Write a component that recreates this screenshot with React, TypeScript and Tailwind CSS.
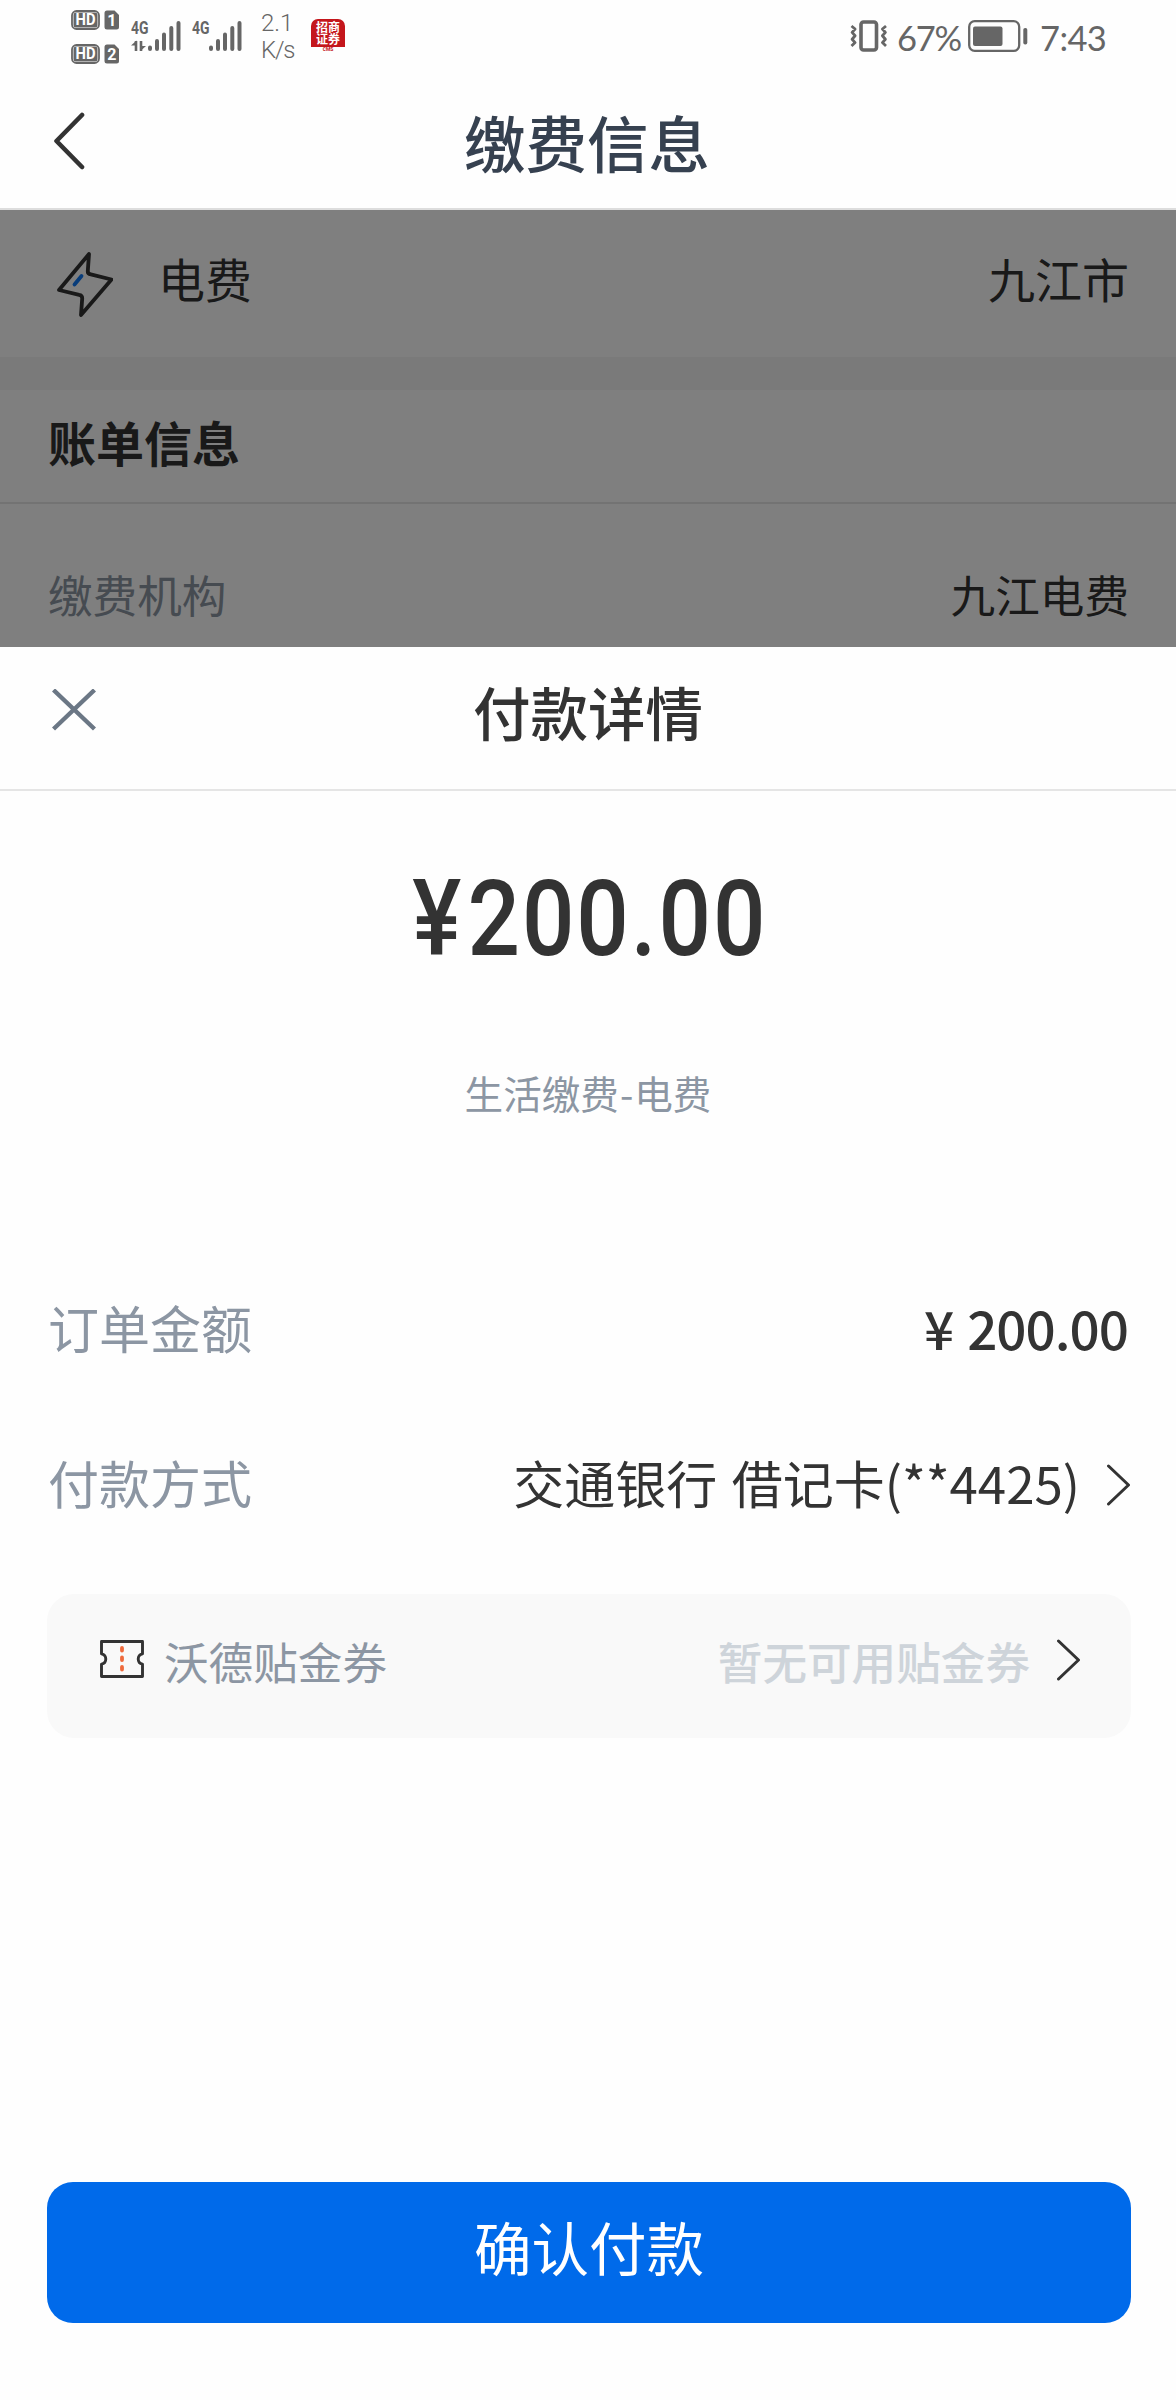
import type { ReactNode } from "react";
import clsx from "clsx";

function HdBadge({ sim }: { sim: string }) {
  return (
    <svg width="49" height="20" viewBox="0 0 49 20" className="block overflow-visible">
      <rect x="1" y="1" width="27" height="18" rx="4.5" fill="none" stroke="#666" strokeWidth="1.8" />
      <rect x="2.5" y="2.5" width="24" height="15" rx="2.5" fill="#666" />
      <text x="4.5" y="15.4" textLength="20" lengthAdjust="spacingAndGlyphs" fontSize="16" fontWeight="700" fontFamily="Roboto, sans-serif" fill="#fff">
        HD
      </text>
      <path d="M36 .5h7.5L48 5v12a2.5 2.5 0 0 1-2.5 2.5H36a2.5 2.5 0 0 1-2.5-2.5V3A2.5 2.5 0 0 1 36 .5z" fill="#666" />
      <text x="40.8" y="15.8" textAnchor="middle" fontSize="16" fontWeight="700" fontFamily="Roboto, sans-serif" fill="#fff">
        {sim}
      </text>
    </svg>
  );
}

function Signal({ data }: { data?: boolean }) {
  return (
    <svg width="50" height="32" viewBox="0 0 50 32" className="block overflow-visible">
      <text x="0" y="14.3" textLength="17.5" lengthAdjust="spacingAndGlyphs" fontSize="18.5" fontWeight="700" fontFamily="Roboto, sans-serif" fill="#666">
        4G
      </text>
      {data && (
        <>
          <path d="M5 21v10M10 21v10" stroke="#666" strokeWidth="2.6" />
          <path d="M5.5 20.5v5H0zM9.5 31v-5H15z" fill="#666" />
        </>
      )}
      <g stroke="#666" strokeWidth="4" strokeLinecap="round">
        <path d="M19 27.5V29M26 21v8M33 14.5V29M40.3 8v21M47.5 3v26" />
      </g>
    </svg>
  );
}

function VibrateIcon() {
  return (
    <svg width="38" height="32" viewBox="0 0 38 32" fill="none" stroke="#666" className="block">
      <rect x="11" y="2" width="15.5" height="28" rx="2.5" strokeWidth="3.6" />
      <path d="M1.5 6l3.6 3-3 3.4 3 3.4-3 3.4 3 3.4-3.6 3.4M36 6l-3.6 3 3 3.4-3 3.4 3 3.4-3 3.4 3.6 3.4" strokeWidth="2.8" strokeLinejoin="round" />
    </svg>
  );
}

function BatteryIcon() {
  return (
    <svg width="60" height="32" viewBox="0 0 60 32" className="block">
      <rect x="1.2" y="1.2" width="50" height="29.6" rx="5.5" fill="none" stroke="#666" strokeWidth="2.3" />
      <rect x="5" y="6.5" width="29.5" height="19.5" rx="2" fill="#666" />
      <rect x="55.3" y="8" width="4" height="16.5" rx="1.8" fill="#666" />
    </svg>
  );
}

function BackIcon() {
  return (
    <svg width="32" height="58" viewBox="0 0 32 58" fill="none" stroke="#333" strokeWidth="4.6" strokeLinecap="round" strokeLinejoin="round">
      <path d="M29 3L3.5 29 29 55" />
    </svg>
  );
}

function BoltIcon() {
  return (
    <svg width="58" height="66" viewBox="0 0 58 66" fill="none" strokeLinecap="round" strokeLinejoin="round">
      <path d="M34 2L32.8 19q-.2 3 3 3.4L56.500 27.500 26 63l1.200-16.500q.2-3.200-3-3.700L4 38z" stroke="#333" strokeWidth="3.800" />
      <path d="M26.500 24l-7 8.500" stroke="#0f78f5" strokeWidth="3.800" />
    </svg>
  );
}

function CloseIcon() {
  return (
    <svg width="44" height="42" viewBox="0 0 44 42" fill="none" stroke="#6b7785" strokeWidth="4.4">
      <path d="M1.5 1l41 39M42.5 1l-41 39" />
    </svg>
  );
}

function TicketIcon() {
  return (
    <svg width="44" height="38" viewBox="0 0 44 38" fill="none">
      <path d="M1.5 1.5h41v12.3a5.3 5.3 0 0 0 0 10.400v12.300h-41V24.200a5.300 5.300 0 0 0 0-10.400z" stroke="#333" strokeWidth="2.900" strokeLinejoin="round" />
      <path d="M22 8v2.500M22 17.500V20M22 27v2.500" stroke="#ee6a3c" strokeWidth="3.800" strokeLinecap="round" />
    </svg>
  );
}

function Chevron() {
  return (
    <svg width="25" height="42" viewBox="0 0 25 42" fill="none" stroke="#333" strokeWidth="3" strokeLinecap="round" strokeLinejoin="round">
      <path d="M2.5 2l20 19-20 19" />
    </svg>
  );
}

function StatusBar() {
  return (
    <div className="flex h-[74px] items-start text-[#666]">
      <div className="ml-[71px] mt-[10px] flex flex-col gap-[14px]">
        <HdBadge sim="1" />
        <HdBadge sim="2" />
      </div>
      <div className="ml-[11px] mt-[20px] flex gap-[11px]">
        <Signal data />
        <Signal />
      </div>
      <div className="ml-[19px] mt-[10px] w-[40px] font-[Roboto] text-[24px] font-light leading-[27px]">
        <div>2.1</div>
        <div className="tracking-[-1.2px]">K/s</div>
      </div>
      <div className="ml-[10px] mt-[19px] w-[34px]">
        <div className="flex h-[28px] flex-col items-center justify-center rounded-t-[7px] bg-[#c4161c] font-bold text-white">
          <div className="text-[12px] leading-[12.5px]">招商</div>
          <div className="text-[12px] leading-[12.5px]">证券</div>
        </div>
        <div className="text-center font-[Roboto] text-[5px] font-bold leading-[5px] text-[#c4161c]">CMS</div>
      </div>
      <div className="ml-auto mr-[72px] mt-[20px] flex h-[32px] items-center font-[Lato]">
        <VibrateIcon />
        <div className="ml-[9px] w-[71px] pt-[3px] text-[34.5px] leading-[32px] tracking-[-1.3px]">67%</div>
        <BatteryIcon />
        <div className="ml-[12px] w-[64px] pt-[3px] text-[34.5px] leading-[32px] tracking-[-0.6px]">7:43</div>
      </div>
    </div>
  );
}

function Row({ label, className, children }: { label: string; className?: string; children: ReactNode }) {
  return (
    <div className={clsx("flex items-center justify-between pl-[48px] pr-[47px]", className)}>
      <span className="text-[#8c96a3]">{label}</span>
      {children}
    </div>
  );
}

export default function App() {
  return (
    <div className="flex h-[2400px] w-[1176px] flex-col overflow-hidden bg-[#fefefe] font-['Noto_Sans_CJK_SC',sans-serif] text-[#333]">
      <StatusBar />
      <header className="grid h-[136px] grid-cols-[1fr_auto_1fr] items-center border-b-2 border-[#ddd] px-[53px]">
        <BackIcon />
        <h1 className="-ml-[2px] pt-[1px] text-[61.5px] font-medium leading-[64px] text-[#364150]">缴费信息</h1>
      </header>

      {/* bill page, dimmed behind the sheet */}
      <main className="relative h-[437px] bg-white">
        <div className="flex h-[147px] items-center pl-[48px] pr-[47px] text-[47px] leading-[50px]">
          <div className="ml-[7px] w-[103px] pt-[2px]">
            <BoltIcon />
          </div>
          <span className="pb-[12px]">电费</span>
          <span className="ml-auto pb-[12px]">九江市</span>
        </div>
        <div className="h-[33px] bg-[#f5f5f5]" />
        <div className="flex h-[114px] items-center border-b-2 border-[#e6e6e6] px-[48px] pb-[11px] text-[48px] font-bold leading-[50px]">
          账单信息
        </div>
        <Row label="缴费机构" className="h-[179px] text-[44.6px] leading-[50px]">
          <span>九江电费</span>
        </Row>
        <div className="absolute inset-0 bg-black/50" />
      </main>

      {/* payment sheet */}
      <section className="flex flex-1 flex-col">
        <div className="grid h-[144px] grid-cols-[1fr_auto_1fr] items-center border-b-2 border-[#e5e5e5] px-[52px] pb-[17px]">
          <CloseIcon />
          <h2 className="pt-[3px] text-[57.5px] font-medium leading-[60px]">付款详情</h2>
        </div>
        <div className="mt-[76px] flex h-[106px] items-center justify-center pl-[4px] font-[Roboto] text-[105px] font-medium leading-[106px]">
          <span className="scale-x-[0.88]">
            ¥<span className="ml-[7px] tracking-[2.2px]">200.00</span>
          </span>
        </div>
        <div className="mt-[94px] text-center text-[38.600px] leading-[50px] text-[#8c96a3]">
          生活缴费<span className="mx-[1px]">-</span>电费
        </div>
        <Row label="订单金额" className="mt-[160px] h-[100px] text-[51px] leading-[60px]">
          <span className="pr-px text-[53px] font-medium tracking-[-1px]">
            ¥<span className="ml-[3px]"> 200.00</span>
          </span>
        </Row>
        <Row label="付款方式" className="mt-[55px] h-[100px] text-[51px] leading-[60px]">
          <div className="-mr-[2px] flex items-center">
            <span>
              交通银行<span className="mx-[1.5px]"> </span>借记卡(**4425)
            </span>
            <span className="ml-[26px] pt-[5px]">
              <Chevron />
            </span>
          </div>
        </Row>
        <div className="ml-[47px] mr-[45px] mt-[62px] flex h-[144px] items-center rounded-[27px] bg-[#f9f9f9] pl-[53px] pr-[50px] text-[44.6px] leading-[50px]">
          <div className="pb-[14px]">
            <TicketIcon />
          </div>
          <span className="ml-[20px] pb-[11px] text-[#8c96a3]">沃德贴金券</span>
          <span className="ml-auto pb-[11px] font-medium text-[#ced4da]">暂无可用贴金券</span>
          <span className="ml-[26px] pb-[13px]">
            <Chevron />
          </span>
        </div>
        <button className="mb-[77px] ml-[47px] mr-[45px] mt-auto h-[141px] rounded-[26px] bg-[#006aea] pb-[13px] text-[57.5px] leading-[60px] text-white">
          确认付款
        </button>
      </section>
    </div>
  );
}
